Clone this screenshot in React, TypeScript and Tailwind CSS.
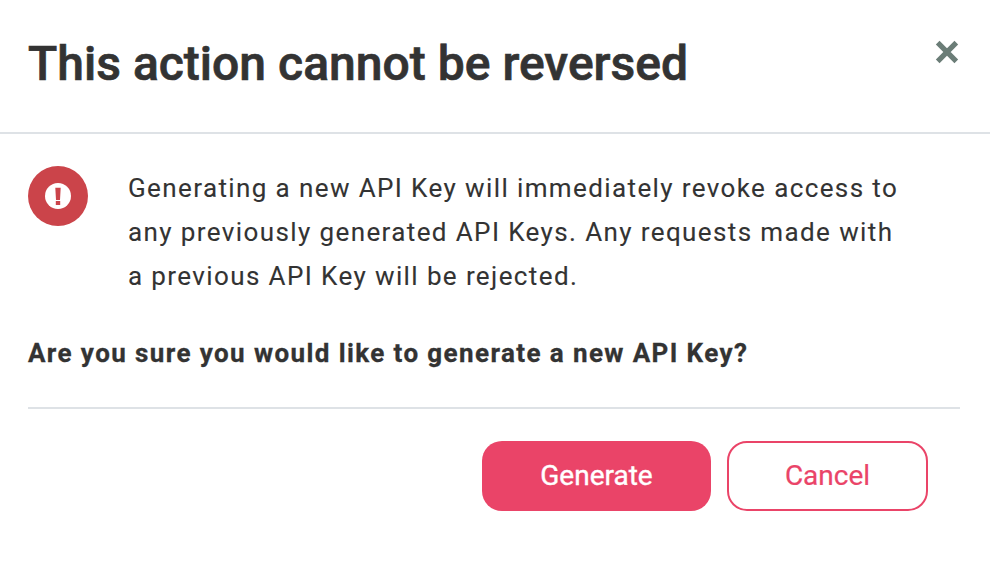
export default function App() {
  return (
    <div className="flex h-[572px] w-[990px] flex-col bg-white font-['Roboto',sans-serif] text-[#333333]">
      <header className="flex h-[134px] items-start justify-between border-b-2 border-[#dee2e6] pr-[31px] pl-7">
        <h1 className="mt-[32px] text-[48px] leading-[64px] font-medium tracking-[0.02px] whitespace-nowrap [-webkit-text-stroke:0.7px_#333333]">This action cannot be reversed</h1>
        <button className="mt-[40px]" aria-label="Close">
          <svg width="24" height="24" viewBox="0 0 24 24" fill="none" stroke="#6b7d77" strokeWidth="5.2">
            <path d="M2.7 2.7 L21.3 21.3 M21.3 2.7 L2.7 21.3" />
          </svg>
        </button>
      </header>
      <main className="flex flex-col pr-[30px] pl-7">
        <div className="mt-8 flex gap-10">
          <div className="flex h-[60px] w-[60px] shrink-0 items-center justify-center rounded-full bg-[#cb444a]">
            <svg width="26" height="26" viewBox="0 0 26 26">
              <circle cx="13" cy="13" r="13" fill="#fff" />
              <path d="M10.3 4.7h5.4l-.7 12.2h-4zM10.8 18h4.4v4h-4.4z" fill="#cb444a" />
            </svg>
          </div>
          <p className="text-[26px] leading-[44px] tracking-[1.39px] whitespace-nowrap [-webkit-text-stroke:0.1px_#333333]">
            Generating a new API Key will immediately revoke access to<br />
            any previously generated API Keys. Any requests made with<br />
            a previous API Key will be rejected.
          </p>
        </div>
        <p className="mt-[33px] text-[26px] leading-[44px] font-bold tracking-[1.4px] whitespace-nowrap [-webkit-text-stroke:0.3px_#333333]">
          Are you sure you would like to generate a new API Key?
        </p>
        <div className="mt-8 flex justify-end gap-4 border-t-2 border-[#dee2e6] pt-8 pr-8">
          <button className="h-[70px] w-[229px] rounded-[20px] bg-[#ea4468] text-[28px] text-white [-webkit-text-stroke:0.4px_#ffffff]">Generate</button>
          <button className="h-[70px] w-[201px] rounded-[20px] border-2 border-[#ea4468] text-[28px] text-[#ea4468] [-webkit-text-stroke:0.2px_#ea4468]">Cancel</button>
        </div>
      </main>
    </div>
  );
}
